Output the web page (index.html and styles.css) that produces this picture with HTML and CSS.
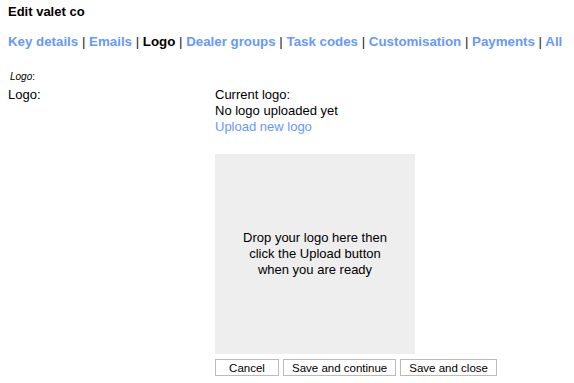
FILE: index.html
```html
<!DOCTYPE html>
<html lang="en">
<head>
    <meta charset="UTF-8">
    <meta name="viewport" content="width=device-width, initial-scale=1.0">
    <title>Edit valet co</title>
    <link rel="stylesheet" href="styles.css">
</head>
<body>

    <h2 class="page-title">Edit valet co</h2>

    <div class="tabs">
        <a href="#">Key details</a> <span class="sep">|</span>
        <a href="#">Emails</a> <span class="sep">|</span>
        <span class="current">Logo</span> <span class="sep">|</span>
        <a href="#">Dealer groups</a> <span class="sep">|</span>
        <a href="#">Task codes</a> <span class="sep">|</span>
        <a href="#">Customisation</a> <span class="sep">|</span>
        <a href="#">Payments</a> <span class="sep">|</span>
        <a href="#">All</a>
    </div>

    <div class="section-label"><em>Logo</em>:</div>

    <div class="field-row">
        <div class="field-label">Logo:</div>
        <div class="field-value">
            <div>Current logo:</div>
            <div>No logo uploaded yet</div>
            <a href="#" class="upload-link">Upload new logo</a>

            <div class="dropzone">
                Drop your logo here then<br>
                click the Upload button<br>
                when you are ready
            </div>

            <div class="actions">
                <button>Cancel</button>
                <button>Save and continue</button>
                <button>Save and close</button>
            </div>
        </div>
    </div>

</body>
</html>
```

FILE: styles.css
```css
body {
    font-family: 'Liberation Sans', Arial, sans-serif;
    font-size: 13px;
    color: #000;
    background-color: #fff;
    margin: 0;
    padding: 0 8px;
}

a {
    color: #6699ff;
    text-decoration: none;
}

.page-title {
    font-size: 13px;
    font-weight: bold;
    margin: 0;
    padding-top: 4px;
    line-height: 16px;
}

.tabs {
    margin-top: 13px;
    font-size: 13.3px;
    font-weight: bold;
    line-height: 18px;
    white-space: nowrap;
}

.tabs .current {
    color: #000;
}

.tabs .sep {
    font-weight: normal;
    color: #222;
}

.section-label {
    margin-top: 20px;
    padding-left: 2px;
    font-size: 10px;
    line-height: 12px;
}

.field-row {
    display: flex;
    margin-top: 4px;
    line-height: 16px;
}

.field-label {
    width: 207px;
}

.dropzone {
    width: 200px;
    height: 200px;
    margin-top: 19px;
    background-color: #eeeeee;
    display: flex;
    align-items: center;
    justify-content: center;
    text-align: center;
}

.actions {
    display: flex;
    gap: 4px;
    margin-top: 5px;
}

button {
    font-family: 'Liberation Sans', Arial, sans-serif;
    font-size: 11.5px;
    height: 17px;
    padding: 0 8px;
    border: 1px solid #bbb;
    background-color: #fff;
    color: #000;
}

.actions button:first-child {
    width: 64px;
}
```
